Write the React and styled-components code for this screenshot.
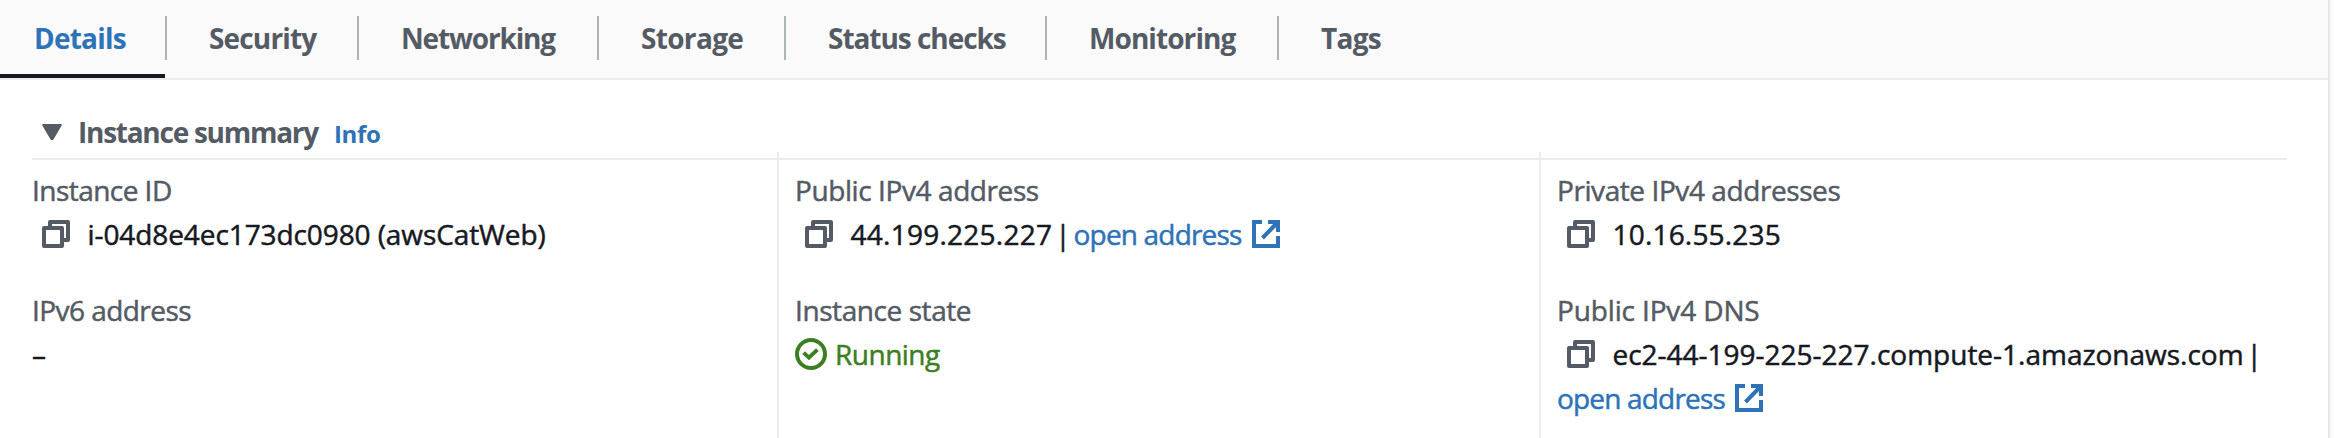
import React from "react";
import styled, { createGlobalStyle } from "styled-components";

const color = {
  text: "#16191f",
  muted: "#545b64",
  link: "#2e73b8",
  success: "#3c7f22",
  border: "#e9edec",
  separator: "#abb7b7",
};

const GlobalStyle = createGlobalStyle`
  body {
    margin: 0;
    background: #fafafa;
    color: ${color.text};
    font-family: "Open Sans", "Noto Sans", sans-serif;
    font-size: 28px;
    line-height: 44px;
  }
`;

const Panel = styled.main`
  box-sizing: border-box;
  width: 2330px;
  height: 438px;
  overflow: hidden;
  background: #fff;
  border-right: 2px solid #e7e7e7;
`;

const TabBar = styled.nav`
  display: grid;
  grid-template-columns: 167px 192px 240px 187px 261px 232px auto;
  height: 78px;
  background: #fafafa;
  border-bottom: 2px solid ${color.border};
`;

const Tab = styled.a`
  display: flex;
  flex-direction: column;
  justify-content: space-between;
  padding-top: 16px;
  color: ${(p) => (p.$active ? color.link : color.muted)};
  font-weight: 700;
`;

const TabLabel = styled.span`
  padding-left: ${(p) => (p.$first ? 34 : 42)}px;
  border-right: ${(p) => (p.$last ? "none" : `2px solid ${color.separator}`)};
  letter-spacing: ${(p) => p.$tracking}px;
  white-space: nowrap;
`;

const ActiveLine = styled.span`
  height: 4px;
  margin-right: 2px;
  background: ${color.text};
`;

const Summary = styled.section`
  padding: 30px 41px 0 32px;
`;

const SummaryHeader = styled.header`
  display: flex;
  align-items: baseline;
  height: 48px;
  padding-left: 10px;
  border-bottom: 2px solid ${color.border};
`;

const Heading = styled.h2`
  margin: 0 0 0 16px;
  color: ${color.muted};
  font-size: 28px;
  font-weight: 700;
  letter-spacing: -1.26px;
`;

const InfoLink = styled.a`
  margin-left: 16px;
  color: ${color.link};
  font-size: 24px;
  font-weight: 700;
  letter-spacing: -0.33px;
`;

const Columns = styled.div`
  display: grid;
  grid-template-columns: 745px 762px 748px;
  height: 286px;
  margin-top: -8px;
  -webkit-text-stroke: 0.5px currentColor;
`;

const Column = styled.dl`
  display: flex;
  flex-direction: column;
  gap: 32px;
  margin: 0;
  padding: 16px 0 0 ${(p) => (p.$divided ? 16 : 0)}px;
  border-left: ${(p) => (p.$divided ? `2px solid ${color.border}` : "none")};
`;

const Label = styled.dt`
  color: ${color.muted};
  letter-spacing: ${(p) => p.$tracking}px;
`;

const Value = styled.dd`
  margin: 0;
`;

const Line = styled.div`
  display: flex;
  align-items: center;
  height: 44px;
  white-space: nowrap;
`;

const Text = styled.span`
  letter-spacing: ${(p) => p.$tracking || 0}px;
`;

const Pipe = styled.span`
  margin: 0 3px;
`;

const Link = styled.a`
  display: inline-flex;
  align-items: center;
  gap: 10px;
  color: ${color.link};
  letter-spacing: -0.82px;
`;

const Status = styled.span`
  display: inline-flex;
  align-items: center;
  gap: 8px;
  color: ${color.success};
  letter-spacing: -0.5px;
`;

const Icon = styled.svg`
  flex: none;
  display: block;
  fill: none;
  stroke: currentColor;
  stroke-width: 4;
`;

const CopySvg = styled(Icon)`
  margin: 0 17.5px 0 10px;
  color: ${color.muted};
  stroke-linejoin: round;
`;

const Caret = styled(Icon)`
  fill: currentColor;
  color: ${color.muted};
  stroke-width: 2;
  stroke-linejoin: round;
  align-self: flex-start;
  margin-top: 14px;
`;

const CopyIcon = () => (
  <CopySvg width="28" height="28" viewBox="0 0 28 28">
    <path d="M8 6V2H26V20H22" />
    <rect x="2" y="8" width="18" height="18" />
  </CopySvg>
);

const ExternalIcon = () => (
  <Icon width="28" height="28" viewBox="0 0 28 28">
    <path d="M10 2H2V26H26V16M16 2H26V12M10.5 18L25.5 2.5" />
  </Icon>
);

const CheckIcon = () => (
  <Icon width="32" height="32" viewBox="0 0 32 32">
    <circle cx="16" cy="16" r="14" />
    <path d="M8.6 14.6L14 19.6L22.4 11.6" />
  </Icon>
);

const OpenAddress = () => (
  <Link>
    open address
    <ExternalIcon />
  </Link>
);

const Field = ({ label, tracking, children }) => (
  <div>
    <Label $tracking={tracking}>{label}</Label>
    <Value>{children}</Value>
  </div>
);

const tabs = [
  ["Details", -0.77],
  ["Security", -0.84],
  ["Networking", -1.16],
  ["Storage", -0.68],
  ["Status checks", -1.04],
  ["Monitoring", -0.93],
  ["Tags", -0.73],
];

export default function App() {
  return (
    <>
      <GlobalStyle />
      <Panel>
        <TabBar>
          {tabs.map(([name, tracking], i) => (
            <Tab key={name} $active={i === 0}>
              <TabLabel $first={i === 0} $last={i === tabs.length - 1} $tracking={tracking}>
                {name}
              </TabLabel>
              {i === 0 && <ActiveLine />}
            </Tab>
          ))}
        </TabBar>
        <Summary>
          <SummaryHeader>
            <Caret width="20" height="16" viewBox="0 0 20 16">
              <path d="M1.2 1H18.8L10.6 15H9.4Z" />
            </Caret>
            <Heading>Instance summary</Heading>
            <InfoLink>Info</InfoLink>
          </SummaryHeader>
          <Columns>
            <Column>
              <Field label="Instance ID" tracking={-0.54}>
                <Line>
                  <CopyIcon />
                  <Text $tracking={-0.09}>i-04d8e4ec173dc0980 (awsCatWeb)</Text>
                </Line>
              </Field>
              <Field label="IPv6 address" tracking={-0.55}>
                <Line>–</Line>
              </Field>
            </Column>
            <Column $divided>
              <Field label="Public IPv4 address" tracking={-0.41}>
                <Line>
                  <CopyIcon />
                  <Text $tracking={0.25}>44.199.225.227</Text>
                  <Pipe>|</Pipe>
                  <OpenAddress />
                </Line>
              </Field>
              <Field label="Instance state" tracking={-0.42}>
                <Line>
                  <Status>
                    <CheckIcon />
                    Running
                  </Status>
                </Line>
              </Field>
            </Column>
            <Column $divided>
              <Field label="Private IPv4 addresses" tracking={-0.42}>
                <Line>
                  <CopyIcon />
                  <Text $tracking={0.19}>10.16.55.235</Text>
                </Line>
              </Field>
              <Field label="Public IPv4 DNS" tracking={-0.14}>
                <Line>
                  <CopyIcon />
                  <Text $tracking={-0.01}>ec2-44-199-225-227.compute-1.amazonaws.com</Text>
                  <Pipe>|</Pipe>
                </Line>
                <Line>
                  <OpenAddress />
                </Line>
              </Field>
            </Column>
          </Columns>
        </Summary>
      </Panel>
    </>
  );
}
